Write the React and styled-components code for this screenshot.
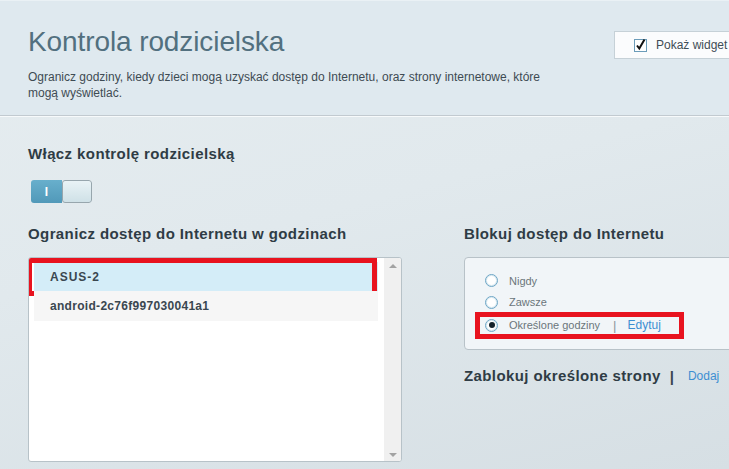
import React from 'react'
import styled, { createGlobalStyle } from 'styled-components'

const GlobalStyle = createGlobalStyle`
  html, body {
    margin: 0;
    padding: 0;
  }
  body {
    font-family: "Liberation Sans", Arial, sans-serif;
    background: #e2eaee;
  }
`

const Page = styled.div`
  width: 729px;
  height: 469px;
  overflow: hidden;
  background: linear-gradient(165deg, #e6edf0 0%, #e1e9ed 45%, #d6dfe4 100%);
`

const Header = styled.header`
  display: flex;
  align-items: flex-start;
  height: 116px;
  box-sizing: border-box;
  padding: 0 0 0 28px;
  background: #dfe9ef;
  border-top: 1px solid #eaf1f5;
  border-bottom: 1px solid #c2cad0;
  box-shadow: 0 1px 0 #f7fafb;
`

const TitleBlock = styled.div`
  flex: 1;
`

const Title = styled.h1`
  margin: 24px 0 0;
  font-size: 28px;
  line-height: 33px;
  font-weight: normal;
  color: #52707f;
  letter-spacing: -0.1px;
`

const Lead = styled.p`
  margin: 11px 0 0;
  width: 530px;
  font-size: 12px;
  line-height: 16px;
  color: #3e4b53;
`

const WidgetBox = styled.label`
  flex-shrink: 0;
  display: flex;
  align-items: center;
  gap: 9px;
  margin: 30px -20px 0 0;
  width: 114px;
  height: 26px;
  padding-left: 19px;
  background: #fbfcfd;
  border: 1px solid #c6d1d7;
  font-size: 12px;
  color: #3f4d56;
  white-space: nowrap;
`

const Main = styled.main`
  padding: 0 28px;
`

const SectionTitle = styled.h2`
  margin: ${p => p.$top || 0}px 0 0;
  font-size: 15px;
  line-height: 18px;
  font-weight: bold;
  color: #2f3c45;
  letter-spacing: 0.4px;
  white-space: nowrap;
`

const Toggle = styled.div`
  display: flex;
  margin: 17px 0 0 3px;
  width: 61px;
  height: 23px;
  border-radius: 3px;
  overflow: hidden;
`

const ToggleOn = styled.div`
  flex: 1;
  display: flex;
  align-items: center;
  justify-content: center;
  background: linear-gradient(#68afcc, #5199b9);
  color: #fff;
  font-size: 12px;
  font-weight: bold;
`

const ToggleKnob = styled.div`
  width: 28px;
  border: 1px solid #97a6ad;
  border-radius: 3px;
  background: linear-gradient(#e9f3f6, #cfe1e7);
`

const Columns = styled.div`
  display: grid;
  grid-template-columns: 374px 300px;
  column-gap: 62px;
  margin-top: 22px;
`

const Column = styled.section`
  display: flex;
  flex-direction: column;
`

const ListBox = styled.div`
  display: flex;
  margin-top: 14px;
  height: 205px;
  box-sizing: border-box;
  background: #fff;
  border: 1px solid #b7c2c8;
  border-radius: 3px;
  overflow: hidden;
`

const Rows = styled.ul`
  flex: 1;
  list-style: none;
  margin: 0;
  padding: 4px 6px 0 5px;
`

const Row = styled.li`
  position: relative;
  display: flex;
  align-items: center;
  height: ${p => p.$h}px;
  padding-left: 16px;
  background: ${p => (p.$selected ? '#d4edf8' : '#f6f6f6')};
  font-size: 12px;
  font-weight: bold;
  color: #3a4750;
  letter-spacing: ${p => (p.$selected ? '1px' : '0.3px')};

  ${p => p.$marked && `
    &::after {
      content: '';
      position: absolute;
      left: -7px;
      right: 1px;
      top: -4px;
      bottom: -5px;
      border: 5px solid #e8131f;
    }
  `}
`

const Scrollbar = styled.div`
  display: flex;
  flex-direction: column;
  justify-content: space-between;
  align-items: center;
  width: 17px;
  padding: 6px 0 4px;
  box-sizing: border-box;
  background: #f0f0f0;
`

const Arrow = styled.span`
  width: 0;
  height: 0;
  border-left: 4px solid transparent;
  border-right: 4px solid transparent;
  ${p => (p.$down ? 'border-top: 4px solid #a3a3a3;' : 'border-bottom: 4px solid #a3a3a3;')}
`

const RadioPanel = styled.div`
  margin-top: 14px;
  height: 93px;
  box-sizing: border-box;
  padding: 12px 0 0 10px;
  background: #f1f5f8;
  border: 1px solid #b8c2c8;
  border-radius: 4px;
`

const RadioRow = styled.div`
  position: relative;
  display: flex;
  align-items: center;
  gap: 11px;
  width: 199px;
  height: ${p => p.$h}px;
  padding-left: 10px;
  font-size: 11px;
  color: #6b757b;

  ${p => p.$marked && `
    &::after {
      content: '';
      position: absolute;
      left: 0;
      right: 0;
      top: -1px;
      bottom: -2px;
      border: 5px solid #e8131f;
    }
  `}
`

const RadioDot = styled.span`
  position: relative;
  width: 11px;
  height: 11px;
  border-radius: 50%;
  border: 1px solid #6da6c6;
  background: radial-gradient(circle at 50% 40%, #ffffff 55%, #e6eef2);
  box-shadow: inset 0 0 0 1px #d8e8f0;

  ${p => p.$checked && `
    &::before {
      content: '';
      position: absolute;
      left: 2.5px;
      top: 2.5px;
      width: 6px;
      height: 6px;
      border-radius: 50%;
      background: #14212b;
    }
  `}
`

const Divider = styled.span`
  margin-left: ${p => (p.$dark ? 0 : 2)}px;
  font-size: ${p => (p.$dark ? 15 : 13)}px;
  font-weight: ${p => (p.$dark ? 'bold' : 'normal')};
  color: ${p => (p.$dark ? '#3a4750' : '#8d979d')};
`

const LinkText = styled.a`
  margin-left: ${p => p.$shift || 0}px;
  font-size: 12px;
  font-weight: normal;
  color: #3d8fd2;
  text-decoration: none;
  letter-spacing: 0;
`

const InlineRow = styled.div`
  display: flex;
  align-items: center;
  gap: 9px;
  margin-top: 17px;
`

const CheckIcon = () => (
  <svg width="13" height="14" viewBox="0 0 13 14">
    <rect x="0.5" y="1.5" width="12" height="12" fill="#fff" stroke="#6b9cb9" />
    <path d="M3 7.5 L5.3 10.5 L10.5 1.5" fill="none" stroke="#111" strokeWidth="2" />
  </svg>
)

const devices = [
  { name: 'ASUS-2', selected: true },
  { name: 'android-2c76f997030041a1', selected: false },
]

const options = [
  { label: 'Nigdy', h: 21 },
  { label: 'Zawsze', h: 22 },
  { label: 'Określone godziny', h: 24, checked: true },
]

export default function App() {
  return (
    <>
      <GlobalStyle />
      <Page>
        <Header>
          <TitleBlock>
            <Title>Kontrola rodzicielska</Title>
            <Lead>
              Ogranicz godziny, kiedy dzieci mogą uzyskać dostęp do Internetu, oraz strony internetowe, które
              mogą wyświetlać.
            </Lead>
          </TitleBlock>
          <WidgetBox>
            <CheckIcon />
            Pokaż widget
          </WidgetBox>
        </Header>

        <Main>
          <SectionTitle $top={29}>Włącz kontrolę rodzicielską</SectionTitle>
          <Toggle>
            <ToggleOn>I</ToggleOn>
            <ToggleKnob />
          </Toggle>

          <Columns>
            <Column>
              <SectionTitle>Ogranicz dostęp do Internetu w godzinach</SectionTitle>
              <ListBox>
                <Rows>
                  {devices.map(d => (
                    <Row key={d.name} $h={d.selected ? 29 : 30} $selected={d.selected} $marked={d.selected}>
                      {d.name}
                    </Row>
                  ))}
                </Rows>
                <Scrollbar>
                  <Arrow />
                  <Arrow $down />
                </Scrollbar>
              </ListBox>
            </Column>

            <Column>
              <SectionTitle>Blokuj dostęp do Internetu</SectionTitle>
              <RadioPanel>
                {options.map(o => (
                  <RadioRow key={o.label} $h={o.h} $marked={o.checked}>
                    <RadioDot $checked={o.checked} />
                    {o.label}
                    {o.checked && (
                      <>
                        <Divider>|</Divider>
                        <LinkText href="#">Edytuj</LinkText>
                      </>
                    )}
                  </RadioRow>
                ))}
              </RadioPanel>
              <InlineRow>
                <SectionTitle>Zablokuj określone strony</SectionTitle>
                <Divider $dark>|</Divider>
                <LinkText href="#" $shift={5}>Dodaj</LinkText>
              </InlineRow>
            </Column>
          </Columns>
        </Main>
      </Page>
    </>
  )
}
